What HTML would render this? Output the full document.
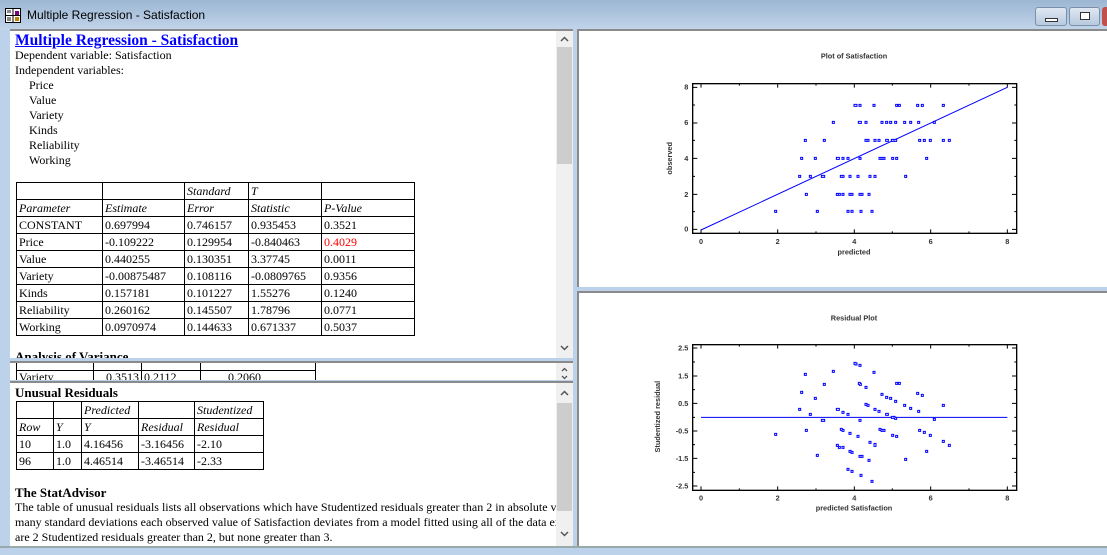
<!DOCTYPE html>
<html><head><meta charset="utf-8"><style>
*{margin:0;padding:0;box-sizing:border-box}
body{width:1107px;height:555px;overflow:hidden;background:#bcd2ea;position:relative;font-family:"Liberation Serif",serif;font-size:12px;color:#000}
.abs{position:absolute}
.title{left:0;top:0;width:1107px;height:30px;background:linear-gradient(#9cb6d3,#c2d5ea)}
.title span{position:absolute;left:27px;top:8px;font-family:"Liberation Sans",sans-serif;font-size:12px}
.pane{background:#fff;overflow:hidden;border-top:2px solid #8a8a8a}
.sb{position:absolute;right:0;top:0;bottom:0;width:17px;background:#f0f0f0}
.sb .th{position:absolute;left:1px;width:15px;background:#cdcdcd}
.sb svg{position:absolute;left:4px}
table{border-collapse:collapse;position:absolute}
td{border:1px solid #000;padding:0 2px;height:17px;line-height:15px;font-size:12px;white-space:nowrap;vertical-align:bottom}
td i{font-style:italic}
.tl{line-height:15px}
</style></head><body>
<div class="abs title"><svg class="abs" style="left:5px;top:8px" width="16" height="15"><rect x="0.5" y="0.5" width="15" height="14" fill="#fff" stroke="#000"/><line x1="8" y1="0" x2="8" y2="15" stroke="#000"/><line x1="0" y1="7.5" x2="16" y2="7.5" stroke="#000"/><rect x="10" y="3" width="4" height="4" fill="#800080"/><rect x="10" y="9" width="4" height="4" fill="#c08000"/><rect x="2" y="2" width="4" height="3" fill="#888"/><rect x="2" y="9" width="4" height="4" fill="#888"/></svg><span>Multiple Regression - Satisfaction</span>
<div class="abs" style="left:1035px;top:7px;width:32px;height:19px;border:1px solid #7b8fa8;border-radius:3px;background:linear-gradient(#dfe8f3,#b7c9de)"><div class="abs" style="left:9px;top:10px;width:13px;height:4px;border:1px solid #333;background:#fff"></div></div>
<div class="abs" style="left:1069px;top:7px;width:31px;height:19px;border:1px solid #7b8fa8;border-radius:3px;background:linear-gradient(#dfe8f3,#b7c9de)"><div class="abs" style="left:10px;top:4px;width:10px;height:8px;border:1px solid #333;background:#fff"></div></div>
<div class="abs" style="left:1102px;top:7px;width:10px;height:19px;border-radius:3px;background:#c0504d"></div>
</div>

<div class="abs pane" style="left:10px;top:29px;width:563px;height:329px">
<div class="abs" style="left:5px;top:1px;font-weight:bold;font-size:15.5px;color:#00f;text-decoration:underline">Multiple Regression - Satisfaction</div>
<div class="abs tl" style="left:5px;top:17px">Dependent variable: Satisfaction<br>Independent variables:</div>
<div class="abs tl" style="left:19px;top:47px">Price<br>Value<br>Variety<br>Kinds<br>Reliability<br>Working</div>
<table style="left:6px;top:151px">
<tr><td style="width:86px"></td><td style="width:82px"></td><td style="width:64px"><i>Standard</i></td><td style="width:73px"><i>T</i></td><td style="width:93px"></td></tr>
<tr><td><i>Parameter</i></td><td><i>Estimate</i></td><td><i>Error</i></td><td><i>Statistic</i></td><td><i>P-Value</i></td></tr>
<tr><td>CONSTANT</td><td>0.697994</td><td>0.746157</td><td>0.935453</td><td>0.3521</td></tr>
<tr><td>Price</td><td>-0.109222</td><td>0.129954</td><td>-0.840463</td><td style="color:#f00">0.4029</td></tr>
<tr><td>Value</td><td>0.440255</td><td>0.130351</td><td>3.37745</td><td>0.0011</td></tr>
<tr><td>Variety</td><td>-0.00875487</td><td>0.108116</td><td>-0.0809765</td><td>0.9356</td></tr>
<tr><td>Kinds</td><td>0.157181</td><td>0.101227</td><td>1.55276</td><td>0.1240</td></tr>
<tr><td>Reliability</td><td>0.260162</td><td>0.145507</td><td>1.78796</td><td>0.0771</td></tr>
<tr><td>Working</td><td>0.0970974</td><td>0.144633</td><td>0.671337</td><td>0.5037</td></tr>
</table>
<div class="abs" style="left:5px;top:318px;font-weight:bold;font-size:13px">Analysis of Variance</div>
<div class="sb"><svg style="top:5px" width="9" height="6"><polyline points="1,5 4.5,1.5 8,5" fill="none" stroke="#555" stroke-width="1.5"/></svg><div class="th" style="top:16px;height:117px"></div><svg style="top:314px" width="9" height="6"><polyline points="1,1 4.5,4.5 8,1" fill="none" stroke="#555" stroke-width="1.5"/></svg></div>
</div>

<div class="abs pane" style="left:10px;top:361px;width:563px;height:19px">
<div class="abs" style="left:6px;top:7px;width:300px;border-top:1px solid #000"></div>
<div class="abs" style="left:6px;top:-4px;height:30px;border-left:1px solid #000"></div>
<div class="abs" style="left:83px;top:-4px;height:30px;border-left:1px solid #000"></div>
<div class="abs" style="left:131px;top:-4px;height:30px;border-left:1px solid #000"></div>
<div class="abs" style="left:190px;top:-4px;height:30px;border-left:1px solid #000"></div>
<div class="abs" style="left:305px;top:-4px;height:30px;border-left:1px solid #000"></div>
<div class="abs" style="left:9px;top:7px">Variety</div><div class="abs" style="left:96px;top:7px">0.3513</div><div class="abs" style="left:134px;top:7px">0.2112</div><div class="abs" style="left:218px;top:7px">0.2060</div>
<div class="sb"><svg style="top:4px" width="9" height="5"><polyline points="2,4 4.5,1.5 7,4" fill="none" stroke="#555" stroke-width="1.3"/></svg><svg style="top:12px" width="9" height="5"><polyline points="2,1 4.5,3.5 7,1" fill="none" stroke="#555" stroke-width="1.3"/></svg></div>
</div>

<div class="abs pane" style="left:10px;top:381px;width:563px;height:165px">
<div class="abs" style="left:5px;top:2px;font-weight:bold;font-size:13px">Unusual Residuals</div>
<table style="left:6px;top:18px">
<tr><td style="width:37px"></td><td style="width:28px"></td><td style="width:57px"><i>Predicted</i></td><td style="width:56px"></td><td style="width:69px"><i>Studentized</i></td></tr>
<tr><td><i>Row</i></td><td><i>Y</i></td><td><i>Y</i></td><td><i>Residual</i></td><td><i>Residual</i></td></tr>
<tr><td>10</td><td>1.0</td><td>4.16456</td><td>-3.16456</td><td>-2.10</td></tr>
<tr><td>96</td><td>1.0</td><td>4.46514</td><td>-3.46514</td><td>-2.33</td></tr>
</table>
<div class="abs" style="left:5px;top:102px;font-weight:bold;font-size:13px">The StatAdvisor</div>
<div class="abs tl" style="left:5px;top:117px;white-space:nowrap">The table of unusual residuals lists all observations which have Studentized residuals greater than 2 in absolute value.<br>many standard deviations each observed value of Satisfaction deviates from a model fitted using all of the data except<br>are 2 Studentized residuals greater than 2, but none greater than 3.</div>
<div class="sb"><svg style="top:7px" width="9" height="6"><polyline points="1,5 4.5,1.5 8,5" fill="none" stroke="#555" stroke-width="1.5"/></svg><div class="th" style="top:20px;height:108px"></div><svg style="top:148px" width="9" height="6"><polyline points="1,1 4.5,4.5 8,1" fill="none" stroke="#555" stroke-width="1.5"/></svg></div>
</div>

<div class="abs pane" style="left:577px;top:29px;width:530px;height:258px;border-left:2px solid #8a8a8a"></div>
<div class="abs pane" style="left:577px;top:291px;width:530px;height:255px;border-left:2px solid #8a8a8a"></div>
<div class="abs" style="left:0;top:546px;width:1107px;height:9px;background:#bcd2ea;border-top:2px solid #9aa;"></div>

<svg class="abs" style="left:580px;top:0" width="527" height="290" viewBox="0 0 1581 870">
<g font-family="Liberation Sans,sans-serif" font-weight="bold" font-size="22" fill="#333">
<text x="822" y="175" text-anchor="middle">Plot of Satisfaction</text>
<text x="822" y="764" text-anchor="middle">predicted</text>
<text transform="translate(276,475) rotate(-90)" text-anchor="middle">observed</text>
<g text-anchor="middle"><text x="363" y="732">0</text><text x="593" y="732">2</text><text x="823" y="732">4</text><text x="1052" y="732">6</text><text x="1282" y="732">8</text></g>
<g text-anchor="end"><text x="325" y="268">8</text><text x="325" y="375">6</text><text x="325" y="483">4</text><text x="325" y="591">2</text><text x="325" y="695">0</text></g>
</g>
<rect x="338" y="251" width="972" height="449" fill="none" stroke="#000" stroke-width="4"/>
<g stroke="#000" stroke-width="3">
<path d="M363 700v-12M593 700v-12M823 700v-12M1052 700v-12M1282 700v-12M363 251v12M593 251v12M823 251v12M1052 251v12M1282 251v12M478 700v-6M708 700v-6M937 700v-6M1167 700v-6M478 251v6M708 251v6M937 251v6M1167 251v6"/>
<path d="M338 262h14M338 369h14M338 475h14M338 583h14M338 688h14M1310 262h-14M1310 369h-14M1310 475h-14M1310 583h-14M1310 688h-14M338 315h7M338 421h7M338 529h7M338 635h7M1310 315h-7M1310 421h-7M1310 529h-7M1310 635h-7"/>
</g>
<line x1="363" y1="690" x2="1282" y2="262" stroke="#00f" stroke-width="3"/>
<path fill="none" stroke="#00f" stroke-width="9" stroke-linecap="square" d="M825 316h0M828 316h0M840 316h0M882 316h0M950 316h0M958 316h0M1013 316h0M1027 316h0M1090 316h0M760 367h0M838 367h0M841 367h0M858 367h0M906 367h0M920 367h0M932 367h0M947 367h0M974 367h0M992 367h0M1016 367h0M1063 367h0M676 421h0M733 421h0M858 421h0M864 421h0M885 421h0M897 421h0M920 421h0M922 421h0M937 421h0M942 421h0M947 421h0M1019 421h0M1033 421h0M1051 421h0M1090 421h0M1108 421h0M665 475h0M706 475h0M772 475h0M775 475h0M789 475h0M804 475h0M840 475h0M900 475h0M906 475h0M912 475h0M938 475h0M950 475h0M1040 475h0M659 529h0M691 529h0M727 529h0M731 529h0M784 529h0M789 529h0M810 529h0M834 529h0M870 529h0M885 529h0M977 529h0M679 583h0M772 583h0M778 583h0M789 583h0M810 583h0M816 583h0M840 583h0M846 583h0M867 583h0M587 634h0M712 634h0M804 634h0M816 634h0M843 634h0M876 634h0"/>
<path fill="none" stroke="#fff" stroke-width="3" stroke-linecap="square" d="M825 316h0M828 316h0M840 316h0M882 316h0M950 316h0M958 316h0M1013 316h0M1027 316h0M1090 316h0M760 367h0M838 367h0M841 367h0M858 367h0M906 367h0M920 367h0M932 367h0M947 367h0M974 367h0M992 367h0M1016 367h0M1063 367h0M676 421h0M733 421h0M858 421h0M864 421h0M885 421h0M897 421h0M920 421h0M922 421h0M937 421h0M942 421h0M947 421h0M1019 421h0M1033 421h0M1051 421h0M1090 421h0M1108 421h0M665 475h0M706 475h0M772 475h0M775 475h0M789 475h0M804 475h0M840 475h0M900 475h0M906 475h0M912 475h0M938 475h0M950 475h0M1040 475h0M659 529h0M691 529h0M727 529h0M731 529h0M784 529h0M789 529h0M810 529h0M834 529h0M870 529h0M885 529h0M977 529h0M679 583h0M772 583h0M778 583h0M789 583h0M810 583h0M816 583h0M840 583h0M846 583h0M867 583h0M587 634h0M712 634h0M804 634h0M816 634h0M843 634h0M876 634h0"/>
</svg>

<svg class="abs" style="left:580px;top:290px" width="527" height="256" viewBox="0 0 1581 768">
<g font-family="Liberation Sans,sans-serif" font-weight="bold" font-size="22" fill="#333">
<text x="822" y="91" text-anchor="middle">Residual Plot</text>
<text x="822" y="662" text-anchor="middle">predicted Satisfaction</text>
<text transform="translate(240,380) rotate(-90)" text-anchor="middle">Studentized residual</text>
<g text-anchor="middle"><text x="363" y="632">0</text><text x="593" y="632">2</text><text x="823" y="632">4</text><text x="1052" y="632">6</text><text x="1282" y="632">8</text></g>
<g text-anchor="end"><text x="325" y="181">2.5</text><text x="325" y="266">1.5</text><text x="325" y="348">0.5</text><text x="325" y="431">-0.5</text><text x="325" y="513">-1.5</text><text x="325" y="596">-2.5</text></g>
</g>
<rect x="338" y="164" width="972" height="437" fill="none" stroke="#000" stroke-width="4"/>
<g stroke="#000" stroke-width="3">
<path d="M363 601v-12M593 601v-12M823 601v-12M1052 601v-12M1282 601v-12M363 164v12M593 164v12M823 164v12M1052 164v12M1282 164v12M478 601v-6M708 601v-6M937 601v-6M1167 601v-6M478 164v6M708 164v6M937 164v6M1167 164v6"/>
<path d="M338 174h14M338 258h14M338 340h14M338 423h14M338 505h14M338 588h14M1310 174h-14M1310 258h-14M1310 340h-14M1310 423h-14M1310 505h-14M1310 588h-14M338 216h7M338 299h7M338 382h7M338 464h7M338 547h7M1310 216h-7M1310 299h-7M1310 382h-7M1310 464h-7M1310 547h-7"/>
</g>
<line x1="363" y1="382" x2="1282" y2="382" stroke="#00f" stroke-width="3"/>
<path fill="none" stroke="#00f" stroke-width="9" stroke-linecap="square" d="M825 220h0M828 222h0M840 226h0M676 253h0M760 244h0M882 247h0M838 280h0M841 283h0M950 280h0M958 280h0M733 283h0M858 292h0M665 307h0M706 325h0M906 313h0M920 322h0M932 325h0M947 334h0M1013 310h0M1027 316h0M858 343h0M864 346h0M974 346h0M1090 346h0M659 358h0M772 358h0M775 358h0M885 358h0M897 364h0M992 355h0M789 367h0M804 373h0M691 373h0M920 373h0M922 373h0M1016 364h0M937 382h0M942 382h0M947 385h0M1063 388h0M727 391h0M731 391h0M840 391h0M679 421h0M784 418h0M789 421h0M900 418h0M906 421h0M912 421h0M1019 421h0M1033 427h0M810 430h0M587 433h0M834 439h0M938 436h0M950 439h0M1051 436h0M870 457h0M885 463h0M885 466h0M1090 454h0M1108 466h0M772 466h0M778 472h0M789 472h0M1040 484h0M810 484h0M816 487h0M712 496h0M840 499h0M846 499h0M867 511h0M977 508h0M804 538h0M816 544h0M843 556h0M876 574h0"/>
<path fill="none" stroke="#fff" stroke-width="3" stroke-linecap="square" d="M825 220h0M828 222h0M840 226h0M676 253h0M760 244h0M882 247h0M838 280h0M841 283h0M950 280h0M958 280h0M733 283h0M858 292h0M665 307h0M706 325h0M906 313h0M920 322h0M932 325h0M947 334h0M1013 310h0M1027 316h0M858 343h0M864 346h0M974 346h0M1090 346h0M659 358h0M772 358h0M775 358h0M885 358h0M897 364h0M992 355h0M789 367h0M804 373h0M691 373h0M920 373h0M922 373h0M1016 364h0M937 382h0M942 382h0M947 385h0M1063 388h0M727 391h0M731 391h0M840 391h0M679 421h0M784 418h0M789 421h0M900 418h0M906 421h0M912 421h0M1019 421h0M1033 427h0M810 430h0M587 433h0M834 439h0M938 436h0M950 439h0M1051 436h0M870 457h0M885 463h0M885 466h0M1090 454h0M1108 466h0M772 466h0M778 472h0M789 472h0M1040 484h0M810 484h0M816 487h0M712 496h0M840 499h0M846 499h0M867 511h0M977 508h0M804 538h0M816 544h0M843 556h0M876 574h0"/>
</svg>
</body></html>
